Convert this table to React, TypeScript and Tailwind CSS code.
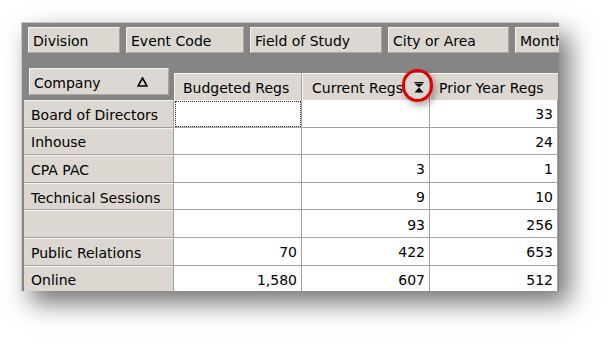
import React from "react";

const font = { fontFamily: '"DejaVu Sans", Verdana, sans-serif' };

const fields = [
  { label: "Division", w: "w-[92px]" },
  { label: "Event Code", w: "w-[118px]" },
  { label: "Field of Study", w: "w-[132px]" },
  { label: "City or Area", w: "w-[121px]" },
  { label: "Month", w: "w-[90px]" },
];

const rows: [string, string, string, string][] = [
  ["Board of Directors", "", "", "33"],
  ["Inhouse", "", "", "24"],
  ["CPA PAC", "", "3", "1"],
  ["Technical Sessions", "", "9", "10"],
  ["", "", "93", "256"],
  ["Public Relations", "70", "422", "653"],
  ["Online", "1,580", "607", "512"],
];

function SortIcon() {
  return (
    <svg width="10" height="11" viewBox="0 0 10 11" className="shrink-0 -mt-[2px]">
      <rect x="0.5" y="0" width="9" height="1.4" fill="#000" />
      <polygon points="1,2 9,2 5,5.6" fill="#000" />
      <polygon points="5,5.4 9.5,10.5 0.5,10.5" fill="#000" />
    </svg>
  );
}

export default function App() {
  return (
    <div
      className="relative w-[614px] h-[346px] bg-white pl-[21px] pt-[22px] text-black overflow-hidden"
      style={font}
    >
      <div className="w-[538px] h-[269px] bg-[#858585] border-t border-l border-[#c8c8c8] overflow-hidden shadow-[10px_12px_24px_rgba(0,0,0,0.55)] text-[14px] leading-none">
        {/* filter fields */}
        <div className="flex gap-[6px] pt-[4px] pl-[6px] whitespace-nowrap">
          {fields.map((f) => (
            <div
              key={f.label}
              className={`${f.w} shrink-0 h-[26px] flex items-center pt-[2px] pl-[4px] bg-[#dcd8d1] border-t border-l border-[#f4f2ee] border-b border-r border-b-[#a9a7a2] border-r-[#a9a7a2] overflow-hidden`}
            >
              {f.label}
            </div>
          ))}
        </div>

        {/* pivot grid */}
        <div className="grid grid-cols-[150px_128px_128px_128px] pl-[2px]">
          <div className="h-[47px] pt-[15px] pl-[5px]">
            <div className="w-[140px] h-[27px] flex items-center justify-between pt-[2px] pl-[4px] pr-[20px] bg-[#dcd8d1] border-t border-l border-[#f4f2ee] border-b border-r border-b-[#a9a7a2] border-r-[#a9a7a2]">
              <span>Company</span>
              <svg width="11" height="10" viewBox="0 0 11 10" className="-mt-[2px]">
                <polygon points="5.5,1 10,9 1,9" fill="none" stroke="#000" strokeWidth="1.6" />
              </svg>
            </div>
          </div>
          <div className="h-[47px] pt-[20px]">
            <div className="h-[27px] flex items-center pt-[2px] pl-[8px] bg-[#dcd8d1] border-t border-l border-[#f4f2ee] border-r border-r-[#a9a7a2] whitespace-nowrap">
              Budgeted Regs
            </div>
          </div>
          <div className="h-[47px] pt-[20px]">
            <div className="h-[27px] flex items-center justify-between pt-[2px] pl-[9px] pr-[5px] bg-[#dcd8d1] border-t border-l border-[#f4f2ee] border-r border-r-[#a9a7a2] whitespace-nowrap">
              <span>Current Regs</span>
              <SortIcon />
            </div>
          </div>
          <div className="h-[47px] pt-[20px]">
            <div className="h-[27px] flex items-center pt-[2px] pl-[8px] bg-[#dcd8d1] border-t border-l border-[#f4f2ee] whitespace-nowrap">
              Prior Year Regs
            </div>
          </div>

          {rows.map((r, i) => (
            <React.Fragment key={i}>
              <div className="h-[27.6px] flex items-center pt-[2px] pl-[7px] bg-[#dcd8d1] border-t border-[#f4f2ee] border-b border-b-[#a3a3a3] border-r border-r-[#a3a3a3] whitespace-nowrap">
                {r[0]}
              </div>
              {r.slice(1).map((v, j) => (
                <div
                  key={j}
                  className={`h-[27.6px] flex items-center justify-end pt-[2px] pr-[4px] bg-white border-b border-r border-[#a3a3a3] ${
                    i === 0 && j === 0
                      ? "outline outline-1 outline-dotted outline-[#333] -outline-offset-2"
                      : ""
                  }`}
                >
                  {v}
                </div>
              ))}
            </React.Fragment>
          ))}
        </div>
      </div>

      {/* red highlight circle */}
      <div className="absolute left-[402px] top-[69px] w-[31px] h-[33px] rounded-full border-[3px] border-[#e50000] shadow-[3px_4px_6px_rgba(0,0,0,0.3)]" />
    </div>
  );
}
